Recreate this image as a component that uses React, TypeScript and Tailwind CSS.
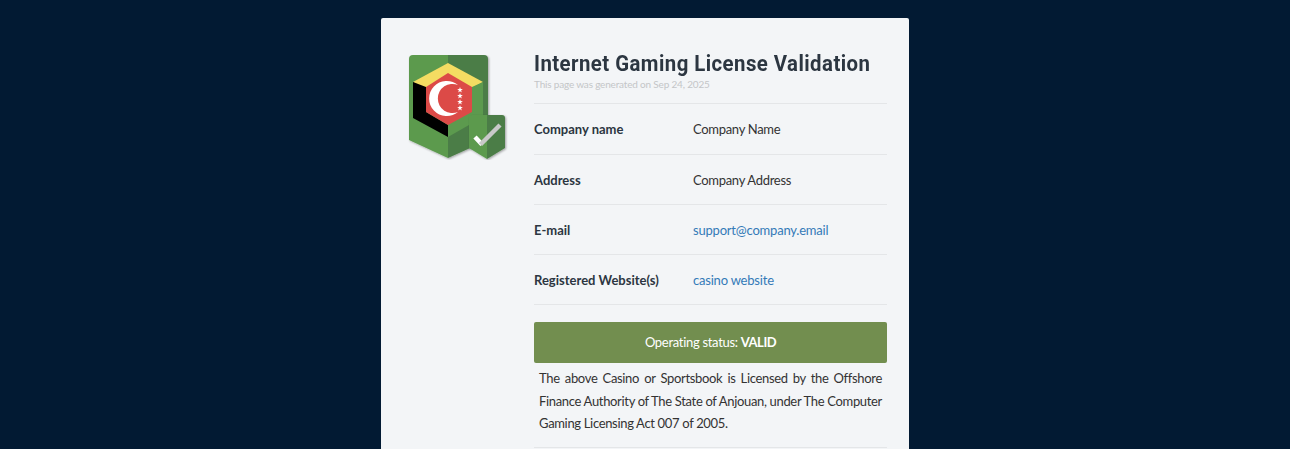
import React from 'react';

const rows = [
  { label: 'Company name', value: 'Company Name', link: false },
  { label: 'Address', value: 'Company Address', link: false },
  { label: 'E-mail', value: 'support@company.email', link: true },
  { label: 'Registered Website(s)', value: 'casino website', link: true },
];

const starPoints = (cx: number, cy: number) => {
  const pts: string[] = [];
  for (let i = 0; i < 10; i++) {
    const r = i % 2 === 0 ? 3 : 1.2;
    const a = -Math.PI / 2 + (i * Math.PI) / 5;
    pts.push(`${(cx + r * Math.cos(a)).toFixed(2)},${(cy + r * Math.sin(a)).toFixed(2)}`);
  }
  return pts.join(' ');
};

const LicenseLogo = () => (
  <svg viewBox="0 0 100 105" className="w-[100px] h-[105px] block">
    <defs>
      <filter id="shadow" x="-20%" y="-20%" width="140%" height="140%">
        <feDropShadow dx="1" dy="1" stdDeviation="1" floodColor="#000" floodOpacity="0.35" />
      </filter>
    </defs>
    {/* shield */}
    <g filter="url(#shadow)">
      <path d="M40 0H5Q1 0 1 4V85L40 103Z" fill="#5c9a4e" />
      <path d="M40 0H76Q80 0 80 4V85L40 103Z" fill="#4c7d47" />
    </g>
    {/* hexagon */}
    <path d="M40 8L75 27L40 46L5 27Z" fill="#f4dc62" />
    <path d="M5 27L18 32V57L40 70V82L5 63Z" fill="#000" />
    <path d="M64 32L75 27V62L40 82V70Z" fill="#5c9a4e" />
    <path d="M40 18L64 32V57L40 70L18 57V32Z" fill="#dc4a47" />
    {/* crescent */}
    <path d="M50 30A17.6 17.6 0 1 0 50 57A14.6 14.6 0 1 1 50 30Z" fill="#fff" />
    <g fill="#fff">
      <polygon points={starPoints(52, 35)} />
      <polygon points={starPoints(52, 41)} />
      <polygon points={starPoints(52, 47)} />
      <polygon points={starPoints(52, 53)} />
    </g>
    {/* check badge */}
    <g filter="url(#shadow)">
      <path d="M79 60H64Q61 60 61 63V93L79 104Z" fill="#5c9a4e" />
      <path d="M79 60H94Q97 60 97 63V93L79 104Z" fill="#4c7d47" />
    </g>
    <path d="M67 82L74 89.5" stroke="#fff" strokeWidth="4.5" fill="none" />
    <path d="M72.5 89.5L92 70" stroke="#c9c9c9" strokeWidth="4.5" fill="none" />
  </svg>
);

export default function App() {
  return (
    <div className="h-screen overflow-hidden bg-[#021a33] pt-[18px] font-['Lato',sans-serif]">
      <div className="mx-auto flex w-[528px] rounded-[2px] bg-[#f3f5f7] pb-10">
        <div className="w-[153px] shrink-0 pl-[27px] pt-[37px]">
          <LicenseLogo />
        </div>
        <div className="w-[353px] shrink-0 pt-[31px]">
          <h1 className="origin-left scale-x-[0.905] whitespace-nowrap font-['Roboto',sans-serif] text-[22.5px] leading-[28px] font-bold tracking-[0.5px] text-[#2c3641]">
            Internet Gaming License Validation
          </h1>
          <p className="text-[10px] leading-[14px] tracking-[-0.18px] text-[#c4c6c8]">
            This page was generated on Sep 24, 2025
          </p>
          <div className="mt-[12px] border-t border-[#e4e6e8]">
            {rows.map((row) => (
              <div
                key={row.label}
                className="flex h-[50px] items-center border-b border-[#e4e6e8] pt-[2px] text-[13px] first:h-[51px]"
              >
                <div className="w-[159px] font-bold text-[#2c3641]">{row.label}</div>
                <div className={row.link ? 'tracking-[-0.2px] text-[#337ab7]' : 'tracking-[-0.3px] text-[#333]'}>
                  {row.value}
                </div>
              </div>
            ))}
          </div>
          <div className="mt-[17px] flex h-[41px] items-center justify-center rounded-[2px] bg-[#728e4f] text-[13px] tracking-[-0.3px] text-white">
            <span>
              Operating status: <b className="tracking-[-0.5px]">VALID</b>
            </span>
          </div>
          <p className="mt-[4px] border-b border-[#e4e6e8] px-[5px] pb-[12px] text-justify text-[13px] leading-[22.5px] tracking-[-0.33px] [word-spacing:-2px] text-[#333]">
            The above Casino or Sportsbook is Licensed by the Offshore Finance Authority of The State of Anjouan, under
            The Computer <span className="[word-spacing:0px]">Gaming Licensing Act 007 of 2005.</span>
          </p>
        </div>
      </div>
    </div>
  );
}
